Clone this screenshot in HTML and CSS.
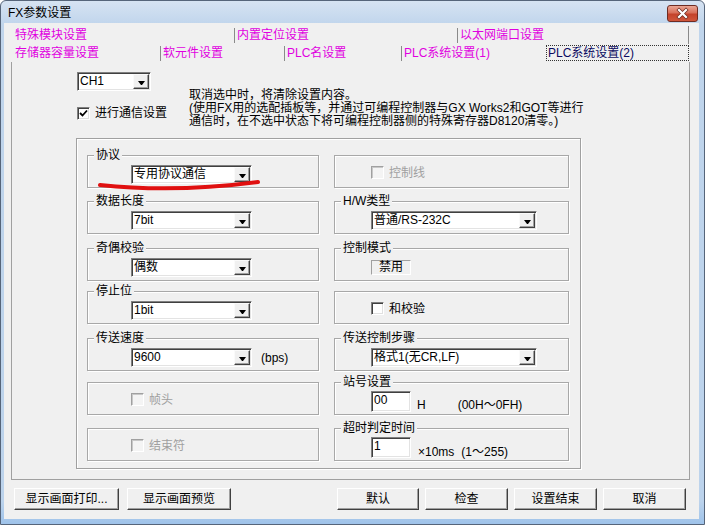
FILE: index.html
```html
<!DOCTYPE html>
<html lang="zh-CN">
<head>
  <meta charset="UTF-8">
  <title>FX参数设置</title>
  <link rel="stylesheet" href="styles.css">
</head>
<body>
  <div class="window">
    <div class="titlebar">
      <span class="title">FX参数设置</span>
      <span class="close">
        <svg width="29" height="15" viewBox="0 0 29 15">
          <path d="M11 4 L18 11 M18 4 L11 11" stroke="#6b2b20" stroke-width="3.6" stroke-linecap="square"/>
          <path d="M11 4 L18 11 M18 4 L11 11" stroke="#fff" stroke-width="2.2" stroke-linecap="square"/>
        </svg>
      </span>
    </div>

    <div class="client">
      <!-- tab headers -->
      <div class="tabs">
        <div class="tab-row">
          <div class="tab t-a">特殊模块设置</div>
          <div class="tab sep t-b">内置定位设置</div>
          <div class="tab sep end t-c">以太网端口设置</div>
        </div>
        <div class="tab-row">
          <div class="tab t-d">存储器容量设置</div>
          <div class="tab sep t-e">软元件设置</div>
          <div class="tab sep t-f">PLC名设置</div>
          <div class="tab sep t-g">PLC系统设置(1)</div>
          <div class="tab active t-h"><span class="focus">PLC系统设置(2)</span></div>
        </div>
      </div>

      <div class="panel">
        <div class="top">
          <div class="top-left">
            <div class="select sel-ch"><span class="value">CH1</span><span class="drop"></span></div>
            <label class="check-row">
              <span class="check on">
                <svg width="9" height="9" viewBox="0 0 9 9"><path d="M1 4 L3.5 6.5 L8 1.5" stroke="#000" stroke-width="1.8" fill="none"/></svg>
              </span>
              <span>进行通信设置</span>
            </label>
          </div>
          <p class="note">取消选中时，将清除设置内容。<br>(使用FX用的选配插板等，并通过可编程控制器与GX Works2和GOT等进行<br>通信时，在不选中状态下将可编程控制器侧的特殊寄存器D8120清零。)</p>
        </div>

        <div class="frame">
          <div class="groups">
            <div class="group">
              <span class="legend">协议</span>
              <div class="row left">
                <div class="select sel-sm"><span class="value">专用协议通信</span><span class="drop"></span></div>
              </div>
            </div>
            <div class="group plain">
              <label class="check-row right off">
                <span class="check dis"></span>
                <span>控制线</span>
              </label>
            </div>

            <div class="group">
              <span class="legend">数据长度</span>
              <div class="row left">
                <div class="select sel-sm"><span class="value">7bit</span><span class="drop"></span></div>
              </div>
            </div>
            <div class="group">
              <span class="legend">H/W类型</span>
              <div class="row right">
                <div class="select sel-lg"><span class="value">普通/RS-232C</span><span class="drop"></span></div>
              </div>
            </div>

            <div class="group">
              <span class="legend">奇偶校验</span>
              <div class="row left">
                <div class="select sel-sm"><span class="value">偶数</span><span class="drop"></span></div>
              </div>
            </div>
            <div class="group">
              <span class="legend">控制模式</span>
              <div class="row right">
                <span class="static">禁用</span>
              </div>
            </div>

            <div class="group">
              <span class="legend">停止位</span>
              <div class="row left">
                <div class="select sel-sm"><span class="value">1bit</span><span class="drop"></span></div>
              </div>
            </div>
            <div class="group plain">
              <label class="check-row right">
                <span class="check"></span>
                <span>和校验</span>
              </label>
            </div>

            <div class="group">
              <span class="legend">传送速度</span>
              <div class="row left">
                <div class="select sel-sm"><span class="value">9600</span><span class="drop"></span></div>
                <span class="unit bps">(bps)</span>
              </div>
            </div>
            <div class="group">
              <span class="legend">传送控制步骤</span>
              <div class="row right">
                <div class="select sel-lg"><span class="value">格式1(无CR,LF)</span><span class="drop"></span></div>
              </div>
            </div>

            <div class="group plain">
              <label class="check-row left off">
                <span class="check dis"></span>
                <span>帧头</span>
              </label>
            </div>
            <div class="group">
              <span class="legend">站号设置</span>
              <div class="row right low">
                <span class="edit">00</span>
                <span class="unit hex">H</span>
                <span class="unit range-a">(00H～0FH)</span>
              </div>
            </div>

            <div class="group plain">
              <label class="check-row left off">
                <span class="check dis"></span>
                <span>结束符</span>
              </label>
            </div>
            <div class="group">
              <span class="legend">超时判定时间</span>
              <div class="row right low">
                <span class="edit">1</span>
                <span class="unit ms">×10ms</span>
                <span class="unit range-b">(1～255)</span>
              </div>
            </div>
          </div>
        </div>
      </div>

      <div class="buttons">
        <button class="btn b-print">显示画面打印...</button>
        <button class="btn b-preview">显示画面预览</button>
        <button class="btn b-default">默认</button>
        <button class="btn b-small">检查</button>
        <button class="btn b-small">设置结束</button>
        <button class="btn b-small">取消</button>
      </div>
    </div>

    <!-- red hand-drawn underline -->
    <svg class="mark" width="170" height="18" viewBox="0 0 170 18">
      <path d="M6 10 Q 81 18 164 7" stroke="#e01010" stroke-width="4" fill="none" stroke-linecap="round"/>
    </svg>
  </div>
</body>
</html>
```

FILE: styles.css
```css
* {
  margin: 0;
  padding: 0;
  box-sizing: border-box;
}

body {
  font-family: "Liberation Sans", "Noto Sans CJK SC", sans-serif;
  font-size: 12px;
  color: #000;
  background: #fff;
}

.window {
  position: relative;
  width: 705px;
  height: 525px;
  border: 1px solid #56657a;
  border-radius: 6px 6px 0 0;
  background: linear-gradient(#d6e3f2, #c0d5ec 24px, #bcd3ec 500px, #9fc3ea);
}

.titlebar {
  height: 22px;
  display: flex;
  align-items: flex-start;
}

.title {
  margin: 5px 0 0 7px;
  line-height: 14px;
}

.close {
  margin: 4px 6px 0 auto;
  width: 31px;
  height: 17px;
  border: 1px solid #6e2c22;
  border-radius: 3px;
  background: linear-gradient(#eaa694, #d8705a 45%, #c4432b 55%, #d0563b);
  display: flex;
  align-items: center;
  justify-content: center;
}

.client {
  margin: 0 5px 5px 3px;
  height: 496px;
  background: #f0f0f0;
}

/* tabs */
.tabs {
  padding: 3px 0 0 8px;
}

.tab-row {
  display: flex;
  height: 18px;
}

.tab {
  line-height: 18px;
  padding-left: 3px;
  color: #e000e0;
  white-space: nowrap;
}

.tab.sep {
  padding-left: 3px;
  background: linear-gradient(#8a8a8a, #8a8a8a) 0 2px / 1px 15px no-repeat;
}

.tab.end {
  border-right: 1px solid #8a8a8a;
}

.tab.active {
  color: #0a0a60;
  padding: 1px 0 0 2px;
}

.focus {
  display: block;
  height: 16px;
  line-height: 14px;
  padding-left: 1px;
  border: 1px dotted #333;
}

.t-a { width: 222px; }
.t-b { width: 223px; }
.t-c { width: 232px; }
.t-d { width: 148px; }
.t-e { width: 124px; }
.t-f { width: 117px; }
.t-g { width: 143px; }
.t-h { width: 145px; }

/* panel */
.panel {
  margin-left: 7px;
  width: 679px;
  height: 418px;
  border: 1px solid #a0a0a0;
  border-top: 0;
}

.top {
  display: flex;
  height: 76px;
  padding: 10px 0 0 65px;
}

.top-left {
  width: 112px;
}

.note {
  margin-top: 17px;
  line-height: 13px;
  white-space: nowrap;
}

.check-row {
  display: flex;
  align-items: center;
  gap: 5px;
  line-height: 14px;
}

.top-left .check-row {
  margin-top: 15px;
}

.check {
  width: 13px;
  height: 13px;
  background: #fff;
  border: 1px solid;
  border-color: #808080 #fff #fff #808080;
  box-shadow: inset 1px 1px 0 #404040, inset -1px -1px 0 #e0e0e0;
  display: flex;
  align-items: center;
  justify-content: center;
}

.check.dis {
  background: #f4f4f4;
  border-color: #a0a0a0 #fff #fff #a0a0a0;
  box-shadow: inset 1px 1px 0 #c8c8c8;
}

.off {
  color: #a0a0a0;
}

/* selects */
.select {
  display: flex;
  height: 19px;
  padding: 1px;
  background: #fff;
  border: 1px solid;
  border-color: #808080 #fff #fff #808080;
  box-shadow: inset 1px 1px 0 #404040, inset -1px -1px 0 #e3e3e3;
}

.select .value {
  flex: 1;
  line-height: 15px;
  padding-left: 1px;
  white-space: nowrap;
}

.drop {
  width: 16px;
  background: #f0f0f0;
  border: 1px solid;
  border-color: #fafafa #404040 #404040 #fafafa;
  box-shadow: inset -1px -1px 0 #a0a0a0;
  display: flex;
  align-items: center;
  justify-content: center;
}

.drop::after {
  content: "";
  width: 1px;
  height: 0;
  margin-top: 2px;
  border-top: 4px solid #000;
  border-left: 3px solid transparent;
  border-right: 3px solid transparent;
}

.sel-ch { width: 74px; }
.sel-sm { width: 121px; }
.sel-lg { width: 166px; }

/* group boxes */
.frame {
  margin-left: 64px;
  width: 505px;
  height: 331px;
  padding: 16px 0 0 10px;
  border: 1px solid #a0a0a0;
  box-shadow: 1px 1px 0 #fff, inset 1px 1px 0 #fff;
}

.groups {
  display: grid;
  grid-template-columns: 232px 235px;
  grid-template-rows: 46px 47px 43px 47px 44px 46px 33px;
  column-gap: 15px;
}

.group {
  height: 33px;
  border: 1px solid #a8a8a8;
  box-shadow: 1px 1px 0 #fff, inset 1px 1px 0 #fff;
  display: flex;
  flex-direction: column;
  align-items: flex-start;
}

.group.plain {
  justify-content: center;
  padding-top: 2px;
}

.legend {
  margin: -8px 0 0 6px;
  padding: 0 2px;
  line-height: 14px;
  height: 14px;
  background: #f0f0f0;
}

.row {
  display: flex;
  align-items: center;
  margin-top: 3px;
}

.row.low {
  align-items: flex-end;
  margin-top: 2px;
}

.left { margin-left: 43px; }
.right { margin-left: 36px; }

.unit {
  line-height: 14px;
  white-space: nowrap;
}

.bps { margin-left: 9px; }
.hex { margin-left: 6px; }
.range-a { margin-left: 32px; }
.ms { margin: 0 0 -1px 7px; }
.range-b { margin: 0 0 -1px 7px; }

.static {
  margin-top: 2px;
  width: 40px;
  height: 15px;
  line-height: 13px;
  text-align: center;
  border: 1px solid;
  border-color: #a0a0a0 #fff #fff #a0a0a0;
}

.edit {
  width: 40px;
  height: 21px;
  padding: 1px 2px;
  line-height: 14px;
  background: #fff;
  border: 1px solid;
  border-color: #808080 #fff #fff #808080;
  box-shadow: inset 1px 1px 0 #404040, inset -1px -1px 0 #e3e3e3;
}

/* bottom buttons */
.buttons {
  display: flex;
  gap: 6px;
  margin-top: 8px;
  padding-left: 10px;
}

.btn {
  height: 22px;
  font: inherit;
  background: #f0f0f0;
  border: 1px solid;
  border-color: #fff #404040 #404040 #fff;
  box-shadow: inset -1px -1px 0 #a0a0a0;
  line-height: 18px;
}

.b-print { width: 105px; margin-right: 2px; }
.b-preview { width: 104px; margin-right: 100px; }
.b-default { width: 82px; }
.b-small { width: 83px; }

.mark {
  position: absolute;
  left: 93px;
  top: 174px;
}
```
